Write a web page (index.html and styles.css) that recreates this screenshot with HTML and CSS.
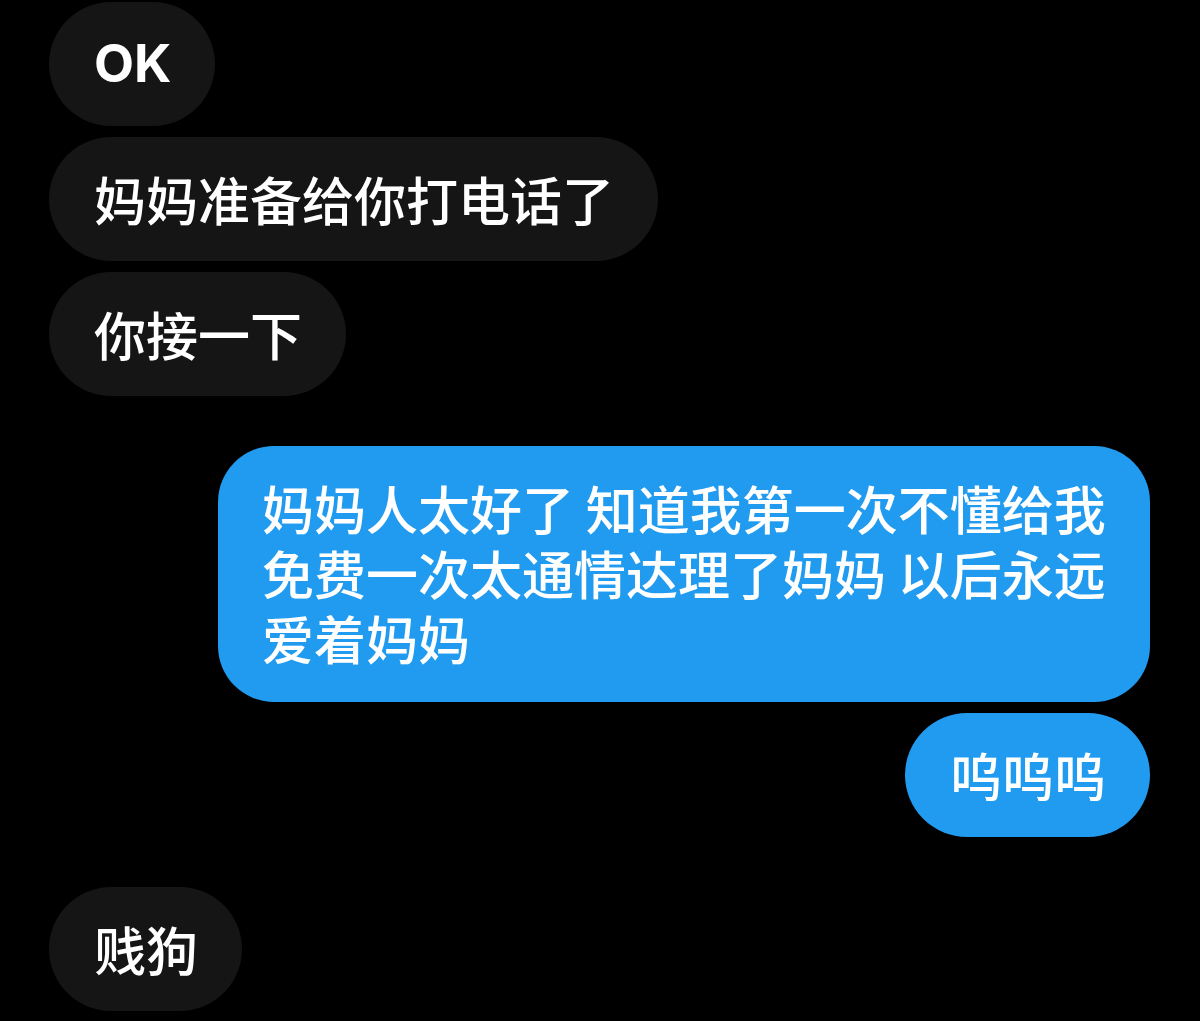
FILE: index.html
```html
<!DOCTYPE html>
<html lang="zh-CN">
<head>
  <meta charset="UTF-8" />
  <meta name="viewport" content="width=device-width, initial-scale=1.0" />
  <title>聊天记录</title>
  <link rel="stylesheet" href="styles.css">
</head>
<body>
  <div class="chat">
    <div class="bubble them latin">OK</div>
    <div class="bubble them">妈妈准备给你打电话了</div>
    <div class="bubble them">你接一下</div>

    <div class="bubble me group-start wide">妈妈人太好了 知道我第一次不懂给我<br>免费一次太通情达理了妈妈 以后永远<br>爱着妈妈</div>
    <div class="bubble me">呜呜呜</div>

    <div class="bubble them group-start">贱狗</div>
  </div>
</body>
</html>
```

FILE: styles.css
```css
body {
  margin: 0;
  background: #000;
  font-family: "Noto Sans CJK SC", "Noto Sans", sans-serif;
}

.chat {
  display: flex;
  flex-direction: column;
  gap: 11px;
  padding: 2px 50px 0 49px;
}

.bubble {
  font-size: 52px;
  line-height: 64px;
  font-weight: 500;
  color: #fff;
  padding: 30px 44px 30px 45px;
  border-radius: 62px;
  box-sizing: border-box;
}

.them {
  align-self: flex-start;
  background: #151515;
}

.me {
  align-self: flex-end;
  background: #219bef;
}

.wide {
  width: 932px;
  white-space: nowrap;
  line-height: 65px;
  padding: 29px 30px 32px 44px;
  border-radius: 56px;
}

.latin {
  font-family: "Inter", "Liberation Sans", sans-serif;
  font-weight: 700;
}

.group-start {
  margin-top: 39px;
}
```
